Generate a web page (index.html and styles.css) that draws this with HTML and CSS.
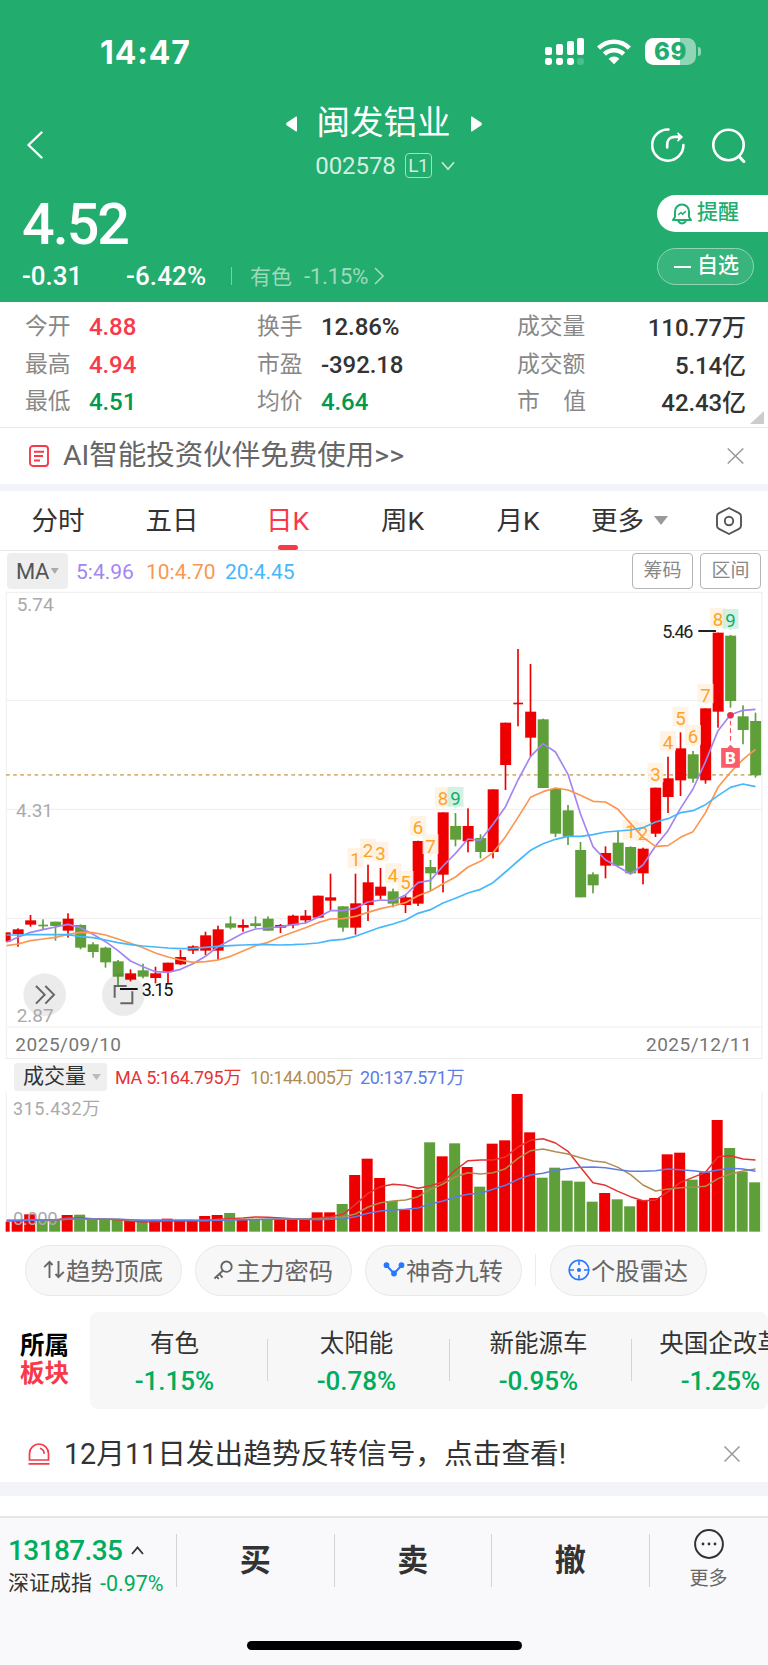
FILE: index.html
```html
<!DOCTYPE html>
<html lang="zh-CN">
<head>
<meta charset="utf-8">
<title>闽发铝业 002578</title>
<link rel="stylesheet" href="styles.css">
</head>
<body>
<div class="screen">
  <header class="header">
    <div class="status">
      <span class="clock">14:47</span>
      <svg class="signal" width="40" height="28" viewBox="0 0 40 28" fill="#fff">
        <rect x="0" y="9" width="7" height="8" rx="2"/><rect x="11" y="6" width="7" height="11" rx="2"/><rect x="22" y="3" width="7" height="14" rx="2"/><rect x="32" y="0" width="7" height="17" rx="2"/>
        <rect x="0" y="20" width="7" height="7" rx="2.4"/><rect x="11" y="20" width="7" height="7" rx="2.4"/><rect x="22" y="20" width="7" height="7" rx="2.4"/><rect x="32" y="20" width="7" height="7" rx="2.4" opacity=".2"/>
      </svg>
      <svg class="wifi" width="34" height="26" viewBox="0 0 34 26" fill="none" stroke="#fff" stroke-width="4.6">
        <path d="M1.6 9.2A21.7 21.7 0 0 1 32.4 9.2"/><path d="M7.4 15.2A13.6 13.6 0 0 1 26.6 15.2"/>
        <path d="M17 25.2L11.6 19.8A7.6 7.6 0 0 1 22.4 19.8Z" fill="#fff" stroke="none"/>
      </svg>
      <div class="battery"><span class="battery-level">69</span></div><i class="battery-nub"></i>
    </div>
    <div class="nav">
      <svg class="back" width="16" height="28" viewBox="0 0 16 28" fill="none" stroke="#fff" stroke-width="2.4" stroke-linecap="round" stroke-linejoin="round"><path d="M14.5 1.5L1.5 14l13 12.5"/></svg>
      <div class="titles">
        <div class="title-row">
          <svg width="11" height="16" viewBox="0 0 11 16" fill="#fff"><path d="M11 1.2v13.6Q11 16 10 15.4L.6 9.2Q-.4 8 .6 6.8L10 .6Q11 0 11 1.2z"/></svg>
          <h1 class="title">闽发铝业</h1>
          <svg width="11" height="16" viewBox="0 0 11 16" fill="#fff"><path d="M0 1.2v13.6Q0 16 1 15.4l9.4-6.2Q11.4 8 10.4 6.8L1 .6Q0 0 0 1.2z"/></svg>
        </div>
        <div class="code-row">
          <span class="code">002578</span><span class="level">L1</span>
          <svg width="14" height="10" viewBox="0 0 14 10" fill="none" stroke="#c8ebdb" stroke-width="1.7"><path d="M1 1.2l6 7 6-7"/></svg>
        </div>
      </div>
      <div class="actions">
        <svg width="34" height="34" viewBox="0 0 34 34" fill="none" stroke="#fff" stroke-width="2.6" stroke-linecap="round" stroke-linejoin="round"><path d="M17.5 1.5A15.6 15.6 0 1 0 32.4 17"/><path d="M16.2 19.5v-3c0-5 3-7.6 7.6-7.6h5.5"/><path d="M27 5.3l4 3.7-4 3.7" fill="#fff" stroke-width="1.6"/></svg>
        <svg width="34" height="35" viewBox="0 0 34 35" fill="none" stroke="#fff" stroke-width="2.6" stroke-linecap="round"><circle cx="16.5" cy="17" r="15.2"/><path d="M27.8 29.2l4 4.4" stroke-width="3"/></svg>
      </div>
    </div>
    <div class="quote">
      <div class="quote-main">
        <div class="price">4.52</div>
        <div class="change-row">
          <span class="change">-0.31</span><span class="percent">-6.42%</span><i class="bar"></i>
          <span class="industry">有色</span><span class="industry-pct">-1.15%</span>
          <svg width="10" height="18" viewBox="0 0 10 18" fill="none" stroke="#9ed9be" stroke-width="1.7"><path d="M1 1l8 8-8 8"/></svg>
        </div>
      </div>
      <div class="quote-side">
        <div class="pill-alert">
          <svg width="20" height="22" viewBox="0 0 20 22" fill="none" stroke="#22ac6e" stroke-width="2" stroke-linejoin="round" stroke-linecap="round"><path d="M1 17h18l-2-3V8.500a7 7 0 0 0-14 0V14z"/><path d="M6.500 18.500q3.500 4 7 0"/><path d="M6.500 11.500l2.500-2 1.600 1.600 3-2.600" stroke-width="1.600"/></svg>
          <span>提醒</span>
        </div>
        <div class="pill-watch"><i class="minus"></i><span>自选</span></div>
      </div>
    </div>
  </header>

  <section class="stats">
    <span class="k">今开</span><span class="v up">4.88</span><span class="k">换手</span><span class="v">12.86%</span><span class="k">成交量</span><span class="v end">110.77万</span>
    <span class="k">最高</span><span class="v up">4.94</span><span class="k">市盈</span><span class="v">-392.18</span><span class="k">成交额</span><span class="v end">5.14亿</span>
    <span class="k">最低</span><span class="v down">4.51</span><span class="k">均价</span><span class="v down">4.64</span><span class="k spread"><b>市</b><b>值</b></span><span class="v end">42.43亿</span>
    <svg class="corner" width="14" height="13" viewBox="0 0 14 13"><path d="M14 0v13H0z" fill="#ccc"/></svg>
  </section>

  <section class="notice">
    <svg class="notice-icon" width="20" height="22" viewBox="0 0 20 22" fill="none" stroke="#f9384a" stroke-width="1.900"><rect x="1" y="1" width="18" height="20" rx="3"/><path d="M5 6.700h10M5 11h9M5 15.500h6"/></svg>
    <span class="notice-text">AI智能投资伙伴免费使用&gt;&gt;</span>
    <svg class="close" width="17" height="16" viewBox="0 0 17 16" stroke="#999" stroke-width="1.500"><path d="M.7.500l15.600 15M16.300.500L.7 15.500"/></svg>
  </section>
  <div class="gap-thin"></div>

  <nav class="tabs">
    <span class="tab">分时</span><span class="tab">五日</span><span class="tab active">日K</span><span class="tab">周K</span><span class="tab">月K</span>
    <span class="tab more">更多<i class="caret"></i></span>
    <svg class="gear" width="26" height="28" viewBox="0 0 26 28" fill="none" stroke="#555" stroke-width="1.900" stroke-linejoin="round"><path d="M13 1l10 5.200q2 1 2 3v9.600q0 2-2 3L13 27 3 21.800q-2-1-2-3V9.200q0-2 2-3z"/><circle cx="13" cy="14" r="4.200"/></svg>
  </nav>

  <div class="ma-row">
    <span class="ma-select">MA<i class="caret small"></i></span>
    <span class="ma ma5">5:4.96</span><span class="ma ma10">10:4.70</span><span class="ma ma20">20:4.45</span>
    <span class="box-btn">筹码</span><span class="box-btn">区间</span>
  </div>

  <svg id="price" class="chart" width="768" height="469" viewBox="0 0 2304 1407"></svg>

  <section class="volume">
    <div class="vol-head">
      <span class="vol-select">成交量<i class="caret mid"></i></span>
      <span class="vm v5">MA 5:164.795万</span><span class="vm v10">10:144.005万</span><span class="vm v20">20:137.571万</span>
    </div>
    <svg id="volume" class="chart" width="768" height="140" viewBox="0 216 2304 420"></svg>
  </section>

  <section class="tools">
    <span class="tool"><svg width="22" height="20" viewBox="0 0 22 20" fill="none" stroke="#666" stroke-width="1.900"><path d="M6.500 18V2M1.200 7.200L6.500 1.800l3 3.200M15.500 1v16M20.800 11.800l-5.300 5.400-3-3.200"/></svg>趋势顶底</span>
    <span class="tool"><svg width="22" height="20" viewBox="0 0 22 20" fill="none" stroke="#666" stroke-width="1.900"><circle cx="13.500" cy="6.700" r="5.200"/><path d="M10 10.500l-8.600 8M6.500 14l3 3.600M3.600 16.400l2.200 2.600"/></svg>主力密码</span>
    <span class="tool"><svg width="22" height="20" viewBox="0 0 22 20" fill="#2878ff" stroke="#2878ff" stroke-width="2"><path d="M3.500 5.500l7.500 8 7.500-8" fill="none"/><circle cx="3.500" cy="5.200" r="1.900"/><circle cx="18.500" cy="5.200" r="1.900"/><circle cx="11" cy="13.500" r="1.900"/></svg>神奇九转</span>
    <i class="tool-sep"></i>
    <span class="tool"><svg width="22" height="22" viewBox="0 0 22 22" fill="none" stroke="#2878ff" stroke-width="1.600"><circle cx="11" cy="11" r="9.800"/><path d="M11 1v5M11 16v5M1 11h5M16 11h5"/><circle cx="11" cy="11" r="1.300" fill="#2878ff"/></svg>个股雷达</span>
  </section>

  <section class="sectors">
    <div class="sector-label"><b>所属</b><b class="red">板块</b></div>
    <div class="sector-list">
      <div class="sector"><span>有色</span><em>-1.15%</em></div>
      <div class="sector"><span>太阳能</span><em>-0.78%</em></div>
      <div class="sector"><span>新能源车</span><em>-0.95%</em></div>
      <div class="sector"><span>央国企改革</span><em>-1.25%</em></div>
    </div>
  </section>

  <section class="signal-notice">
    <svg class="alarm" width="22" height="22" viewBox="0 0 22 22" fill="none" stroke="#f9384a" stroke-width="1.700"><path d="M1.500 17V10.500a9.500 9.500 0 0 1 19 0V17zM.5 20.800h21"/><path d="M12 5.300q4 1.200 4.200 5.500"/></svg>
    <span class="signal-text">12月11日发出趋势反转信号，点击查看!</span>
    <svg class="close" width="16" height="16" viewBox="0 0 16 16" stroke="#999" stroke-width="1.500"><path d="M.5.500l15 15M15.500.500l-15 15"/></svg>
  </section>
  <div class="gap-wide"></div>
  <div class="blank"></div>

  <footer class="footer">
    <div class="bottom-row">
      <div class="index">
        <div class="index-value">13187.35<svg width="13" height="9" viewBox="0 0 13 9" fill="none" stroke="#333" stroke-width="1.800"><path d="M1 8l5.500-6.500L12 8"/></svg></div>
        <div class="index-name">深证成指<em>-0.97%</em></div>
      </div>
      <div class="trade">买</div><div class="trade">卖</div><div class="trade">撤</div>
      <div class="more-cell">
        <svg width="30" height="30" viewBox="0 0 30 30"><circle cx="15" cy="15" r="13.900" fill="none" stroke="#333" stroke-width="2"/><g fill="#333"><circle cx="9" cy="15" r="1.400"/><circle cx="15" cy="15" r="1.400"/><circle cx="21" cy="15" r="1.400"/></g></svg>
        <span>更多</span>
      </div>
    </div>
    <div class="home-bar"></div>
  </footer>
</div>
<script src="chart.js"></script>
</body>
</html>
```
FILE: styles.css
```css
* { box-sizing: border-box; margin: 0; padding: 0; }
body { width: 768px; background: #fff; font-family: Roboto, "Noto Sans CJK SC", sans-serif; color: #333; }
i, em { font-style: normal; display: block; }
svg { display: block; flex: none; }
span { white-space: nowrap; }
.screen { width: 768px; height: 1665px; overflow: hidden; display: flex; flex-direction: column; }
.screen > * { flex: none; }

.header { height: 302px; background: #22ac6e; color: #fff; }
.status { height: 77px; padding-top: 38px; display: flex; align-items: flex-start; }
.clock { width: 445px; margin-left: 100px; font: 700 32px/28px Inter, sans-serif; letter-spacing: .9px; padding-top: 1px; }
.wifi { margin: 1px 14px 0 12px; }
.battery { width: 51px; height: 27px; border-radius: 8.500px; background: linear-gradient(90deg, #fff 69%, #90d5b6 69%); }
.battery-level { display: block; font: 800 24px/27px Inter, sans-serif; color: #22ac6e; text-align: center; letter-spacing: .5px; }
.battery-nub { width: 3px; height: 9px; margin: 9px 0 0 2px; border-radius: 0 4px 4px 0; background: #90d5b6; }

.nav { height: 107px; display: flex; padding: 0 22px 0 27px; }
.back { margin-top: 54px; }
.titles { flex: 1; padding-left: 73px; display: flex; flex-direction: column; align-items: center; }
.title-row { display: flex; align-items: center; gap: 20px; height: 52px; margin-top: 21px; }
.title { font-size: 33.500px; line-height: 50px; font-weight: 400; margin-top: -2px; }
.code-row { display: flex; align-items: center; height: 27px; margin-top: 2px; gap: 9px; color: #d3efe2; padding-left: 3px; }
.code { font-size: 24px; font-weight: 400; letter-spacing: -.1px; line-height: 27px; margin-top: 2px; }
.level { width: 27px; height: 25px; border: 1.500px solid #a7dcc5; border-radius: 4px; font-size: 19px; line-height: 23px; text-align: center; font-weight: 400; letter-spacing: -.5px; }
.actions { display: flex; gap: 27px; padding-top: 51px; }

.quote { display: flex; height: 118px; }
.quote-main { width: 657px; padding-left: 22px; }
.price { font-size: 57.500px; font-weight: 500; line-height: 60px; height: 72px; padding-top: 11px; letter-spacing: -2px; }
.change-row { display: flex; align-items: center; height: 38px; margin-top: 1px; }
.change { width: 104px; font-weight: 500; font-size: 26px; }
.percent { width: 105px; font-weight: 500; font-size: 26px; letter-spacing: .1px; }
.bar { width: 1px; height: 18px; background: #7fcdaa; }
.industry { font-size: 21px; color: #9ed9be; margin-left: 18px; margin-right: 12px; margin-top: -2px; }
.industry-pct { font-size: 22.500px; color: #9ed9be; margin-right: 6px; letter-spacing: -.4px; }
.quote-side { width: 111px; padding-top: 11px; }
.pill-alert, .pill-watch { display: flex; align-items: center; height: 37px; font-size: 21px; line-height: 33px; }
.pill-alert span, .pill-watch span { margin-top: -2px; }
.pill-alert { background: #fff; color: #22ac6e; border-radius: 19px 0 0 19px; padding-left: 15px; gap: 5px; font-weight: 500; }
.pill-watch { width: 97px; margin-top: 16px; border: 1px solid #90d5b6; background: #38b47d; border-radius: 19px; padding-left: 16px; gap: 6px; font-weight: 500; }
.minus { width: 17px; height: 2px; background: #fff; }

.stats { height: 126px; border-bottom: 1px solid #e8e8e8; padding: 5px 22px 0 25px; display: grid; grid-template-columns: 64px 168px 64px 196px 90px 1fr; grid-auto-rows: 37.500px; align-items: center; position: relative; }
.k { font-size: 22.800px; color: #888; font-weight: 400; margin-top: -2px; }
.v { font-size: 24px; font-weight: 500; color: #333; padding-top: 3px; letter-spacing: -.1px; }
.v.up { color: #f9384a; }
.v.down { color: #00994e; }
.v.end { text-align: right; padding-top: 0; }
.spread { display: flex; justify-content: space-between; width: 69px; }
.spread b { font-weight: inherit; }
.corner { position: absolute; right: 4px; bottom: 3px; }

.notice { height: 56px; display: flex; align-items: center; }
.notice-icon { margin-left: 29px; }
.notice-text { width: 664px; margin-left: 14px; font-size: 28.500px; color: #666; font-weight: 400; line-height: 50px; }
.gap-thin { height: 7px; background: #f2f4f9; }

.tabs { height: 60px; border-bottom: 1px solid #e8e8e8; display: grid; grid-template-columns: 116px 112px 119px 111px 120px 102px 1fr; align-items: center; font-size: 26.500px; }
.tab { line-height: 60px; height: 59px; text-align: center; font-weight: 400; }
.active { color: #f9384a; position: relative; }
.active::after { content: ""; position: absolute; left: 50%; bottom: 0; width: 20px; height: 5px; margin-left: -10px; border-radius: 3px; background: #f9384a; }
.tab.more { display: flex; align-items: center; gap: 10px; padding-left: 13px; }
.caret { width: 14px; height: 9px; background: #999; clip-path: polygon(0 0, 100% 0, 50% 100%); }
.caret.small { width: 8px; height: 6px; background: #aaa; }
.caret.mid { width: 9px; height: 6px; background: #bbb; }
.gear { margin-left: 36px; }

.ma-row { height: 39px; padding: 2px 7px 0; display: flex; align-items: flex-start; }
.ma-select { width: 61px; height: 36px; background: #eee; border-radius: 4px; display: flex; align-items: center; gap: 2px; padding-left: 9px; font-size: 22px; color: #555; letter-spacing: -.5px; }
.ma { font-size: 21px; line-height: 38px; }
.ma5 { color: #a385f2; width: 70px; margin-left: 8px; }
.ma10 { color: #fb9653; width: 79px; }
.ma20 { color: #46b7fb; width: 407px; }
.box-btn { width: 61px; height: 36px; border: 1.500px solid #b5b5b5; border-radius: 4px; text-align: center; font-size: 19px; line-height: 34px; color: #888; font-weight: 400; flex: none; }
.box-btn + .box-btn { margin-left: 7px; }

.chart text { font-family: Roboto, "Noto Sans CJK SC", sans-serif; }

.volume { height: 173px; }
.vol-head { height: 33px; display: flex; padding: 4px 0 0 14px; }
.vol-select { width: 93px; height: 28px; background: #efefef; border-radius: 3px; display: flex; align-items: center; gap: 6px; padding-left: 9px; font-size: 21px; line-height: 24px; padding-bottom: 3px; color: #333; font-weight: 400; }
.vol-select .caret { margin-top: 3px; }
.vm { font-size: 18px; line-height: 30px; letter-spacing: -.3px; }
.v5 { color: #e33333; margin-left: 8px; width: 135px; }
.v10 { color: #b18c50; width: 110px; letter-spacing: -.45px; }
.v20 { color: #5d7de6; letter-spacing: -.35px; }

.tools { height: 80px; padding: 13px 25px 0; display: flex; gap: 13px; }
.tool { width: 157px; height: 51px; border: 1px solid #e8e8e8; border-radius: 26px; background: #f7f7f7; display: flex; align-items: center; justify-content: center; gap: 1px; padding-right: 1px; padding-bottom: 2px; font-size: 24.300px; color: #666; font-weight: 400; }
.tool-sep { width: 1px; height: 32px; background: #ececec; margin: 9px 1px 0 0; }

.sectors { height: 97px; display: flex; }
.sector-label { width: 90px; padding: 20px 0 0 20px; font-size: 24.500px; line-height: 28px; color: #000; }
.sector-label b { display: block; }
.sector-label .red { color: #f9384a; }
.sector-list { width: 678px; border-radius: 8px; background: #f7f7f7; overflow: hidden; display: flex; padding-top: 14px; }
.sector { flex: none; width: 182px; text-align: center; background: linear-gradient(#d4d4d4, #d4d4d4) right 4px top 13px / 1px 42px no-repeat; }
.sector span { display: block; font-size: 24.500px; line-height: 36px; width: 169px; }
.sector em { font-size: 26px; line-height: 38px; color: #00ad5c; width: 169px; font-weight: 500; }

.signal-notice { height: 73px; padding-top: 17px; display: flex; align-items: center; }
.alarm { margin-left: 28px; }
.signal-text { width: 660px; margin-left: 14px; font-size: 28.700px; line-height: 50px; font-weight: 400; }
.gap-wide { height: 14px; background: #f2f4f9; }
.blank { height: 20px; }

.footer { height: 149px; border-top: 2px solid #e6e6e9; background: #f9f9fb; }
.bottom-row { display: flex; height: 123px; padding-top: 16px; }
.index { width: 176px; padding: 0 0 0 8px; }
.index-value { display: flex; align-items: center; gap: 9px; font-size: 28px; line-height: 34px; color: #00ad5c; font-weight: 500; letter-spacing: -.6px; }
.index-value svg { margin-top: -2px; }
.index-name { display: flex; gap: 8px; font-size: 21px; line-height: 30px; font-weight: 400; }
.index-name em { color: #00ad5c; font-size: 21.500px; font-weight: 400; line-height: 31px; }
.trade { width: 157.500px; height: 53px; border-left: 1px solid #d4d4d4; text-align: center; font-size: 31px; line-height: 54px; font-weight: 700; }
.more-cell { width: 119px; height: 53px; border-left: 1px solid #d4d4d4; display: flex; flex-direction: column; align-items: center; font-size: 19px; color: #666; font-weight: 400; }
.more-cell svg { margin-top: -5px; }
.more-cell span { line-height: 28px; margin-top: 6px; }
.home-bar { width: 275px; height: 9px; border-radius: 5px; margin: 0 auto; background: #000; }
```
FILE: chart.js
```js
const RED = '#ef0000', GREEN = '#5f9f3a';
const X = i => 16.5 + 37.5 * i;

// colour, high, low, body top, body bottom, volume bar top
const days = [
  ['r',1027,1055,1027,1055,605],['r',1015,1070,1018,1032,603],['r',975,1010,991,1004,583],['g',988,1020,1004,1009,598],
  ['g',995,1052,995,1008,600],['r',970,1043,986,1022,585],['g',1003,1078,1005,1073,584],['g',1057,1103,1063,1086,598],
  ['g',1070,1133,1073,1117,600],['g',1110,1185,1114,1160,600],['r',1138,1174,1150,1169,603],['g',1121,1165,1141,1160,603],
  ['r',1130,1180,1150,1164,603],['r',1118,1182,1118,1145,596],['r',1080,1125,1101,1123,603],['r',1066,1092,1069,1082,603],
  ['r',1025,1095,1036,1082,588],['r',1007,1109,1018,1082,585],['g',979,1018,1000,1013,579],['r',988,1025,1005,1013,598],
  ['g',979,1015,1000,1008,598],['g',979,1022,986,1022,598],['r',1002,1029,1005,1013,598],['r',974,1015,977,1006,600],
  ['r',960,1000,977,991,598],['r',917,983,917,983,577],['r',851,960,922,932,577],['g',949,1025,949,1013,552],
  ['r',851,1034,940,1013,465],['r',824,993,877,945,416],['r',834,928,890,917,474],['g',896,952,904,941,543],
  ['r',915,969,922,945,569],['r',752,948,753,941,510],['g',810,903,831,850,367],['r',667,907,667,854,409],
  ['g',669,769,708,749,370],['r',655,787,708,754,441],['g',733,805,744,786,500],['r',598,805,598,786,371],
  ['r',398,600,398,525,361],['r',177,409,338,343,222],['r',222,500,365,443,337],['g',386,594,388,594,473],
  ['g',597,741,597,731,443],['g',645,765,661,740,482],['g',756,922,780,922,485],['g',847,910,853,886,545],
  ['r',769,865,789,827,519],['g',722,827,758,827,538],['g',769,850,771,850,559],['r',773,883,776,850,540],
  ['r',593,741,593,731,534],['r',500,669,565,621,403],['r',427,618,475,571,398],['g',483,578,493,566,479],
  ['r',355,581,355,571,457],['r',128,413,128,365,300],['g',135,353,137,333,384],['g',346,463,379,420,455],['g',368,563,393,556,487]
];

const priceLines = {
  '#a385f2': [1057,1042,1027,1019,1011,1003,1013,1033,1055,1082,1113,1130,1145,1147,1138,1121,1099,1070,1050,1030,1017,1014,1010,1004,999,982,962,962,955,936,930,932,915,878,871,828,790,747,751,703,650,570,500,461,486,553,672,770,810,830,852,825,768,722,655,597,515,422,374,361,358],
  '#fb9653': [1067,1062,1052,1047,1042,1033,1027,1028,1035,1047,1060,1073,1089,1101,1110,1117,1115,1110,1099,1083,1067,1057,1040,1027,1013,998,987,986,979,967,956,948,938,917,903,881,861,831,814,788,740,682,622,605,594,600,616,634,636,658,700,742,769,767,742,725,668,592,547,508,478],
  '#46b7fb': [1035,1035,1034,1034,1034,1034,1040,1043,1050,1058,1064,1068,1071,1074,1076,1075,1072,1069,1067,1065,1064,1064,1065,1064,1062,1059,1051,1048,1039,1025,1012,1002,990,970,959,939,925,909,898,878,846,813,781,761,748,739,739,734,726,723,720,713,696,686,668,662,644,617,592,582,590]
};
const volumeLines = {
  '#e33333': [602,602,600,600,600,594,594,596,597,599,603,606,605,603,603,603,602,598,596,594,591,592,594,596,597,594,590,583,553,520,500,493,496,505,497,486,450,422,420,420,411,381,361,356,369,394,442,488,496,514,530,542,540,515,487,472,457,410,407,417,420],
  '#b18c50': [600,600,600,600,600,598,598,598,598,598,600,601,601,601,601,601,601,600,599,598,598,598,597,597,596,597,595,591,582,561,548,543,540,530,508,492,470,458,462,458,446,415,392,387,395,402,413,423,427,442,464,495,513,507,503,502,499,476,462,453,447],
  '#5d7de6': [602,602,601,600,599,598,597,597,598,598,599,601,601,601,601,601,602,601,600,599,599,598,598,598,598,599,598,597,590,580,573,570,568,564,552,543,531,523,520,508,496,478,465,460,451,446,442,441,443,449,454,454,452,447,449,452,457,450,445,447,454]
};
// day index, count, top of the tag
const counts = [[28,1,774],[29,2,746],[30,3,755],[31,4,820],[32,5,843],[33,6,678],[34,7,733],[35,8,591],[36,9,591],
  [50,1,690],[51,2,695],[52,3,518],[53,4,423],[54,5,350],[55,6,405],[56,7,281],[57,8,54],[58,9,57]];

const rect = (x, y, w, h, fill, extra = '') => `<rect x="${x}" y="${y}" width="${w}" height="${h}" fill="${fill}" ${extra}/>`;
const text = (x, y, s, size, fill, extra = '') => `<text x="${x}" y="${y}" font-size="${size}" fill="${fill}" ${extra}>${s}</text>`;
const curve = (ys, color, w) => `<polyline fill="none" stroke="${color}" stroke-width="${w}" stroke-linejoin="round" points="${ys.map((y, i) => (i ? X(i) : 20) + ',' + y).join(' ')}"/>`;
const bar = i => i ? [X(i) - 16, 33] : [17, 15];

let p = '';
[7, 331, 658, 985, 1311].forEach(y => p += rect(18, y - 1.5, 2268, 3, '#ededed'));
p += rect(17, 6, 4, 1401, '#f2f2f2') + rect(2284, 6, 4, 1401, '#f2f2f2');
p += '<path d="M18 554.500H2286" stroke="#d9b078" stroke-width="5" stroke-dasharray="11 10.400"/>';
p += text(50, 64, '5.74', 57, '#aaa') + text(48, 682, '4.31', 57, '#aaa');
days.forEach(([c, hi, lo, top, bot], i) => {
  const f = c === 'r' ? RED : GREEN, [x, w] = bar(i);
  if (i) p += rect(X(i) - 2.5, hi, 5, lo - hi, f);
  p += rect(i === 3 || i === 41 ? x + 2 : x, top, i === 3 || i === 41 ? 29 : w, bot - top, f);
});
counts.forEach(([i, n, y]) => {
  const g = n === 9, x = X(i);
  p += `<path d="M${x - 24} ${y}h48v59h-18l-6 6-6-6h-18z" fill="${g ? '#c9eddc' : '#fff0e0'}" opacity=".8"/>`;
  p += text(x, y + 55, n, 56, g ? '#0fae69' : '#fda428', 'text-anchor="middle"');
});
for (const c in priceLines) p += curve(priceLines[c], c, 5);
p += `<circle cx="${X(58)}" cy="376" r="10" fill="#e6304a"/><path d="M${X(58)} 392V460" stroke="#f6505f" stroke-width="3.500" stroke-dasharray="14 9"/>`;
p += `<path d="M${X(58) - 28} 474h18l10-10 10 10h18v59h-56z" fill="#fa5c6c"/>` + text(X(58), 521, 'B', 50, '#fff', 'text-anchor="middle" font-weight="900"');
p += text(1987, 143, '5.46', 54, '#222', 'textLength="93"') + rect(2095, 120, 53, 6, '#222');
p += '<circle cx="134" cy="1214" r="64" fill="#000" opacity=".08"/><circle cx="370" cy="1214" r="64" fill="#000" opacity=".08"/>';
p += '<g fill="none" stroke="#666" stroke-width="6"><path d="M108 1188l26 26-26 27M136 1188l26 26-26 27"/><path d="M344 1223v-35h36M361 1240h36v-36"/></g>';
p += rect(360, 1194, 53, 6, '#111') + text(425, 1218, '3.15', 54, '#111', 'textLength="95"') + text(50, 1296, '2.87', 57, '#aaa');
p += text(46, 1382, '2025/09/10', 57, '#777', 'textLength="317"') + text(1938, 1382, '2025/12/11', 57, '#777', 'textLength="317"');
p += rect(18, 1404, 2268, 3, '#ededed');
document.getElementById('price').innerHTML = p;

let v = rect(17, 216, 4, 420, '#f2f2f2') + rect(2284, 216, 4, 420, '#f2f2f2');
v += text(39, 286, '315.432万', 54, '#aaa', 'textLength="261"');
days.forEach((d, i) => {
  const [x, w] = bar(i);
  v += rect(i ? x - 3 : x, d[5], i ? w : 12, 635 - d[5], d[0] === 'r' ? RED : GREEN);
});
v += text(39, 614, '0.000', 56, '#aaa', 'textLength="134"');
for (const c in volumeLines) v += curve(volumeLines[c], c, 4.5);
document.getElementById('volume').innerHTML = v;
```
